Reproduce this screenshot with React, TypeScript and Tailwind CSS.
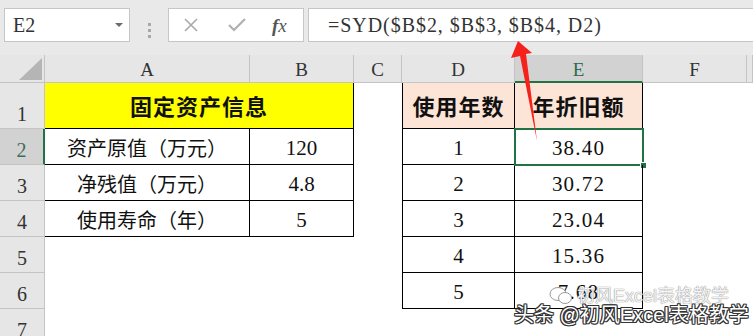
import React from "react";

const serif = { fontFamily: '"Liberation Serif", "Noto Sans CJK SC", serif' };
const cjk = { fontFamily: '"Liberation Serif", "Noto Sans CJK SC", serif' };

const colHead = ["A", "B", "C", "D", "E", "F", ""];

function ColHeader({ label, active }: { label: string; active?: boolean }) {
  return (
    <div
      className={
        "flex items-center justify-center border-r border-b border-[#c4c4c4] text-[19px] leading-none " +
        (active ? "bg-[#d2d2d2] text-[#2b6e4a] border-b-2 border-b-[#217346]" : "bg-[#e6e6e6] text-[#333]")
      }
      style={serif}
    >
      <span className="pt-[2px]">{label}</span>
    </div>
  );
}

function RowHeader({ n, active }: { n: number; active?: boolean }) {
  return (
    <div
      className={
        "flex items-end justify-center border-b border-r border-[#c4c4c4] text-[20px] leading-none pb-[4px] " +
        (active ? "bg-[#d2d2d2] text-[#3f6d55] border-r-2 border-r-[#217346]" : "bg-[#e6e6e6] text-[#333]")
      }
      style={serif}
    >
      {n}
    </div>
  );
}

function Cell({
  children,
  className = "",
  bold,
}: {
  children?: React.ReactNode;
  className?: string;
  bold?: boolean;
}) {
  return (
    <div
      className={
        "flex items-center justify-center leading-none text-[#111] pt-[4px] " +
        (bold ? "font-bold text-[22px] " : "text-[20px] ") +
        className
      }
      style={cjk}
    >
      {children}
    </div>
  );
}

export default function App() {
  const leftRows = [
    ["资产原值（万元）", "120"],
    ["净残值（万元）", "4.8"],
    ["使用寿命（年）", "5"],
  ];
  const rightRows = [
    ["1", "38.40"],
    ["2", "30.72"],
    ["3", "23.04"],
    ["4", "15.36"],
    ["5", "7.68"],
  ];

  return (
    <div className="relative w-[753px] h-[336px] overflow-hidden bg-white">
      {/* Toolbar */}
      <div className="flex h-[55px] bg-[#e9e9e9] pt-[8px]">
        <div className="ml-[4px] flex h-[34px] w-[126px] items-center justify-between border border-[#c6c6c6] bg-white pl-[8px] pr-[6px]">
          <span className="text-[20px] leading-none text-[#333]" style={serif}>
            E2
          </span>
          <svg width="8" height="5" viewBox="0 0 8 5">
            <path d="M0 0 L8 0 L4 4 Z" fill="#6b6b6b" />
          </svg>
        </div>
        <div className="flex w-[38px] flex-col items-center justify-center gap-[3px] pb-[2px]">
          <span className="h-[3px] w-[3px] bg-[#a8a8a8]" />
          <span className="h-[3px] w-[3px] bg-[#a8a8a8]" />
          <span className="h-[3px] w-[3px] bg-[#a8a8a8]" />
        </div>
        <div className="flex h-[34px] w-[136px] items-center border border-[#c6c6c6] bg-white">
          <svg className="ml-[14px]" width="16" height="16" viewBox="0 0 16 16">
            <path d="M2 2 L14 14 M14 2 L2 14" stroke="#a9a9a9" strokeWidth="1.6" />
          </svg>
          <svg className="ml-[29px]" width="18" height="14" viewBox="0 0 18 14">
            <path d="M1 7 L6 12 L17 1" stroke="#b0b0b0" strokeWidth="2.2" fill="none" />
          </svg>
          <span className="ml-[26px] text-[19px] italic leading-none text-[#555]" style={{ fontFamily: '"Liberation Serif", serif' }}>
            <span className="font-bold">f</span>x
          </span>
        </div>
        <div className="ml-[4px] flex h-[34px] flex-1 items-center border-y border-l border-[#c6c6c6] bg-white pl-[19px]">
          <span className="text-[20px] leading-none tracking-[0.95px] text-[#333]" style={serif}>
            =SYD($B$2, $B$3, $B$4, D2)
          </span>
        </div>
      </div>

      {/* Sheet */}
      <div className="grid grid-cols-[45px_205px_104px_48px_113px_128px_104px_1fr] grid-rows-[28px_46px_36px_36px_36px_36px_36px_36px]">
        {/* Corner */}
        <div className="relative border-r border-b border-[#c4c4c4] bg-[#e6e6e6]">
          <svg className="absolute right-[2px] bottom-[2px]" width="23" height="22" viewBox="0 0 23 22">
            <path d="M23 0 L23 22 L0 22 Z" fill="#b5b5b5" />
          </svg>
        </div>
        {colHead.map((c, i) => (
          <ColHeader key={i} label={c} active={c === "E"} />
        ))}

        {/* Row 1 */}
        <RowHeader n={1} />
        <Cell bold className="col-span-2 bg-[#ffff00] border-r border-b border-black tracking-[1px]">
          固定资产信息
        </Cell>
        <div />
        <Cell bold className="bg-[#fce4d6] border-l border-r border-b border-black tracking-[1px]">
          使用年数
        </Cell>
        <Cell bold className="bg-[#fce4d6] border-r border-b border-black tracking-[1px]">
          年折旧额
        </Cell>
        <div />
        <div />

        {/* Rows 2-7 */}
        {[0, 1, 2, 3, 4, 5].map((r) => {
          const left = leftRows[r];
          const right = rightRows[r];
          return (
            <React.Fragment key={r}>
              <RowHeader n={r + 2} active={r === 0} />
              {left ? (
                <>
                  <Cell className="border-r border-b border-black">{left[0]}</Cell>
                  <Cell className="border-r border-b border-black text-[21px]">{left[1]}</Cell>
                </>
              ) : (
                <>
                  <div />
                  <div />
                </>
              )}
              <div />
              {right ? (
                <>
                  <Cell className="border-l border-r border-b border-black text-[21px]">{right[0]}</Cell>
                  <div className="relative">
                    <Cell className="h-full border-r border-b border-black text-[21px] tracking-[1.2px]">{right[1]}</Cell>
                    {r === 0 && (
                      <>
                        <div className="absolute -left-[1px] -top-[1px] -right-[1px] -bottom-[1px] border-2 border-[#217346]" />
                        <div className="absolute -right-[4px] -bottom-[4px] h-[7px] w-[7px] border border-white bg-[#217346]" />
                      </>
                    )}
                  </div>
                </>
              ) : (
                <>
                  <div />
                  <div />
                </>
              )}
              <div />
              <div />
            </React.Fragment>
          );
        })}
      </div>

      {/* Red arrow annotation */}
      <svg className="pointer-events-none absolute left-0 top-0" width="753" height="336" viewBox="0 0 753 336">
        <polygon points="518,41 532,53 526,54 537,141 520,56 511,58" fill="#f5221b" />
      </svg>

      {/* Watermarks */}
      <div
        className="pointer-events-none absolute left-[549px] top-[286px] flex items-center gap-[4px] text-[18px] leading-none text-white/90"
        style={{
          fontFamily: '"Liberation Sans", "Noto Sans CJK SC", sans-serif',
          textShadow: "0 0 1px #888, 0 0 1px #888",
        }}
      >
        <svg width="24" height="20" viewBox="0 0 24 20">
          <ellipse cx="9" cy="8" rx="8" ry="6.5" fill="white" stroke="#999" strokeWidth="1" />
          <ellipse cx="16" cy="12" rx="6.5" ry="5.5" fill="white" stroke="#999" strokeWidth="1" />
        </svg>
        <span>初风Excel表格教学</span>
      </div>
      <div
        className="pointer-events-none absolute left-[514px] top-[305px] text-[20px] leading-none text-white"
        style={{
          fontFamily: '"Liberation Sans", "Noto Sans CJK SC", sans-serif',
          textShadow:
            "1px 0 0 #333, -1px 0 0 #333, 0 1px 0 #333, 0 -1px 0 #333, 1px 1px 0 #333, -1px -1px 0 #333, 1px -1px 0 #333, -1px 1px 0 #333",
        }}
      >
        头条 @初风Excel表格教学
      </div>
    </div>
  );
}
